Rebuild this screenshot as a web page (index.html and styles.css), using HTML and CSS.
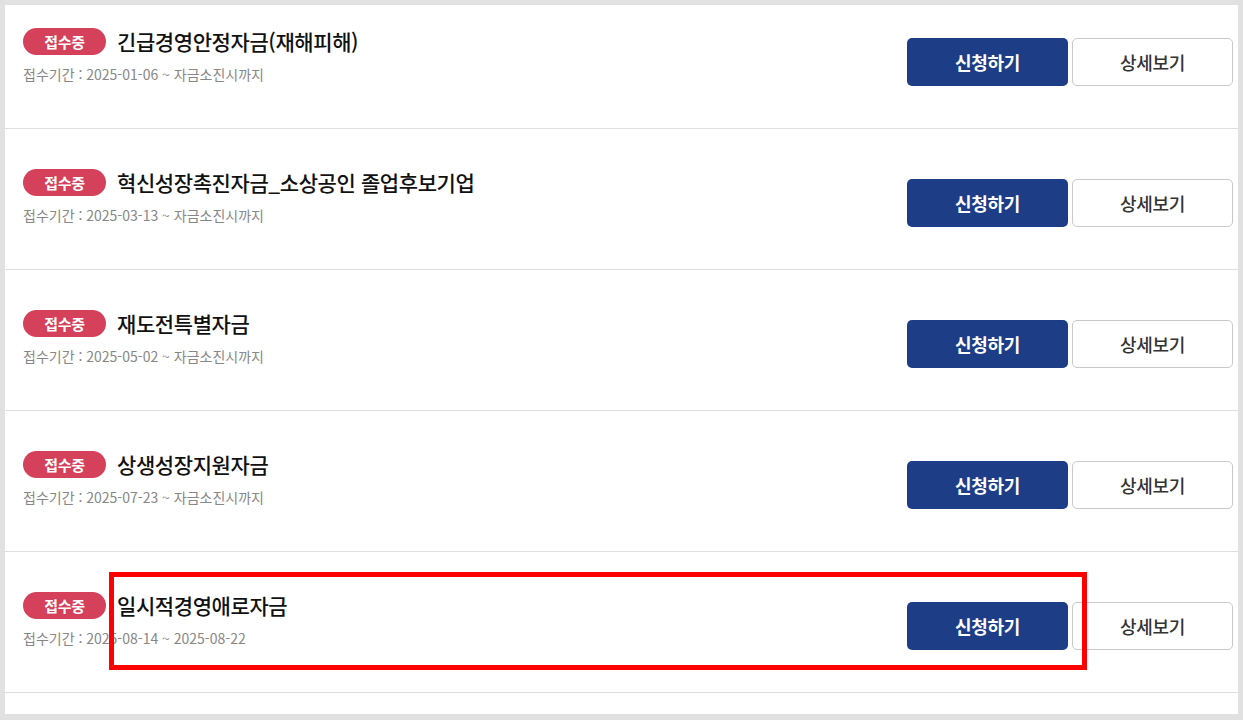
FILE: index.html
```html
<!DOCTYPE html>
<html lang="ko">
<head>
<meta charset="utf-8">
<link rel="stylesheet" href="styles.css">
</head>
<body>
<div class="frame">
  <ul class="list">
    <li class="row">
      <div class="info">
        <div class="head"><span class="badge">접수중</span><span class="title">긴급경영안정자금(재해피해)</span></div>
        <div class="date">접수기간 : 2025-01-06 ~ 자금소진시까지</div>
      </div>
      <div class="actions"><a class="btn apply">신청하기</a><a class="btn detail">상세보기</a></div>
    </li>
    <li class="row">
      <div class="info">
        <div class="head"><span class="badge">접수중</span><span class="title">혁신성장촉진자금_소상공인 졸업후보기업</span></div>
        <div class="date">접수기간 : 2025-03-13 ~ 자금소진시까지</div>
      </div>
      <div class="actions"><a class="btn apply">신청하기</a><a class="btn detail">상세보기</a></div>
    </li>
    <li class="row">
      <div class="info">
        <div class="head"><span class="badge">접수중</span><span class="title">재도전특별자금</span></div>
        <div class="date">접수기간 : 2025-05-02 ~ 자금소진시까지</div>
      </div>
      <div class="actions"><a class="btn apply">신청하기</a><a class="btn detail">상세보기</a></div>
    </li>
    <li class="row">
      <div class="info">
        <div class="head"><span class="badge">접수중</span><span class="title">상생성장지원자금</span></div>
        <div class="date">접수기간 : 2025-07-23 ~ 자금소진시까지</div>
      </div>
      <div class="actions"><a class="btn apply">신청하기</a><a class="btn detail">상세보기</a></div>
    </li>
    <li class="row">
      <div class="info">
        <div class="head"><span class="badge">접수중</span><span class="title">일시적경영애로자금</span></div>
        <div class="date">접수기간 : 2025-08-14 ~ 2025-08-22</div>
      </div>
      <div class="actions"><a class="btn apply">신청하기</a><a class="btn detail">상세보기</a></div>
    </li>
    <li class="row"></li>
  </ul>
</div>
<div class="highlight"></div>
</body>
</html>
```
FILE: styles.css
```css
* { box-sizing: border-box; }
html, body { margin: 0; padding: 0; }
body {
  background: #e1e1e1;
  font-family: "Noto Sans CJK KR", "Noto Sans", sans-serif;
  width: 1243px;
  height: 720px;
  padding: 5px 5px 6px 5px;
  overflow: hidden;
}
.frame {
  background: #fff;
  height: 709px;
  overflow: hidden;
}
.list {
  list-style: none;
  margin: -17px 0 0 0;
  padding: 0;
}
.row {
  display: flex;
  justify-content: space-between;
  align-items: flex-start;
  height: 141px;
  padding: 39px 5px 0 18px;
  border-bottom: 1px solid #dedede;
}
.info { display: flex; flex-direction: column; }
.head { display: flex; align-items: center; height: 28px; }
.badge {
  display: inline-flex;
  align-items: center;
  justify-content: center;
  width: 83px;
  height: 27px;
  border-radius: 14px;
  background: #d5405b;
  color: #fff;
  font-size: 15px;
  font-weight: 700;
  letter-spacing: -0.3px;
}
.title {
  margin-left: 11px;
  font-size: 21px;
  font-weight: 500;
  color: #111;
  letter-spacing: -0.4px;
  line-height: 28px;
}
.date {
  margin-top: 9px;
  font-size: 14px;
  line-height: 20px;
  color: #878787;
  letter-spacing: 0;
}
.actions { display: flex; gap: 4px; margin-top: 11px; }
.btn {
  display: flex;
  align-items: center;
  justify-content: center;
  width: 161px;
  height: 48px;
  border-radius: 5px;
  font-size: 18px;
  letter-spacing: -0.3px;
  text-decoration: none;
}
.apply { background: #1d3d86; color: #fff; font-weight: 700; }
.detail { background: #fff; color: #333; border: 1px solid #c9c9c9; font-weight: 500; }
.highlight {
  position: absolute;
  left: 109px;
  top: 572px;
  width: 978px;
  height: 98px;
  border: 5px solid #ff0000;
}
```
